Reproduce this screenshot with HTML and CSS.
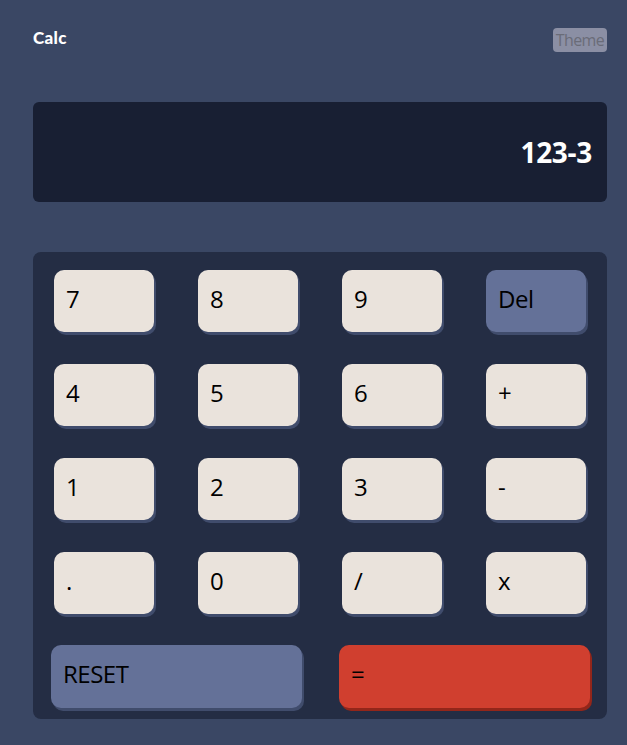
FILE: index.html
```html
<!DOCTYPE html>
<html lang="en">
<head>
<meta charset="utf-8">
<title>Calc</title>
<link rel="stylesheet" href="styles.css">
</head>
<body>
<div class="app">
  <header class="top">
    <span class="logo">Calc</span>
    <button class="theme">Theme</button>
  </header>
  <div class="display">123-3</div>
  <div class="pad">
    <div class="keys">
      <button class="key">7</button>
      <button class="key">8</button>
      <button class="key">9</button>
      <button class="key key-blue">Del</button>
      <button class="key">4</button>
      <button class="key">5</button>
      <button class="key">6</button>
      <button class="key">+</button>
      <button class="key">1</button>
      <button class="key">2</button>
      <button class="key">3</button>
      <button class="key">-</button>
      <button class="key">.</button>
      <button class="key">0</button>
      <button class="key">/</button>
      <button class="key">x</button>
    </div>
    <div class="bottom">
      <button class="key key-blue key-wide">RESET</button>
      <button class="key key-red key-wide">=</button>
    </div>
  </div>
</div>
</body>
</html>
```
FILE: styles.css
```css
html, body {
  margin: 0;
  padding: 0;
  background: #3a4764;
}
.app {
  padding: 28px 20px 26px 33px;
  display: flex;
  flex-direction: column;
  font-family: "Open Sans", sans-serif;
}
.top {
  display: flex;
  justify-content: space-between;
  align-items: flex-start;
  height: 74px;
}
.logo {
  color: #ffffff;
  font-family: "Lato", sans-serif;
  font-weight: 900;
  font-size: 17px;
  line-height: 18px;
  margin-top: 1px;
  letter-spacing: 0.3px;
}
.theme {
  width: 54px;
  height: 24px;
  padding: 0;
  border: none;
  border-radius: 4px;
  background: #8b8fa4;
  color: #6a6c78;
  font-family: "Open Sans", sans-serif;
  font-size: 16px;
  letter-spacing: -0.6px;
  line-height: 24px;
}
.display {
  width: 574px;
  height: 100px;
  box-sizing: border-box;
  background: #181f33;
  border-radius: 6px;
  color: #ffffff;
  font-family: "Open Sans", sans-serif;
  font-weight: 700;
  font-size: 28px;
  display: flex;
  align-items: center;
  justify-content: flex-end;
  padding: 0 15px 0 0;
  letter-spacing: -0.3px;
}
.pad {
  margin-top: 50px;
  width: 574px;
  height: 467px;
  box-sizing: border-box;
  background: #242d44;
  border-radius: 8px;
  padding: 18px 17px 0 18px;
}
.keys {
  display: grid;
  grid-template-columns: repeat(4, 100px);
  column-gap: 44px;
  row-gap: 32px;
  padding: 0 0 0 3px;
}
.key {
  height: 62px;
  border: none;
  border-radius: 10px;
  background: #eae3dc;
  box-shadow: 2px 3px 0 #404c6c;
  color: #000000;
  font-family: "Open Sans", sans-serif;
  font-size: 24px;
  letter-spacing: -0.5px;
  text-align: left;
  padding: 0 0 6px 12px;
}
.key-blue {
  background: #647198;
}
.key-red {
  background: #d03f2f;
  box-shadow: 2px 3px 0 #93261a;
}
.bottom {
  display: flex;
  gap: 37px;
  margin-top: 31px;
}
.key-wide {
  width: 251px;
  height: 63px;
}
```
